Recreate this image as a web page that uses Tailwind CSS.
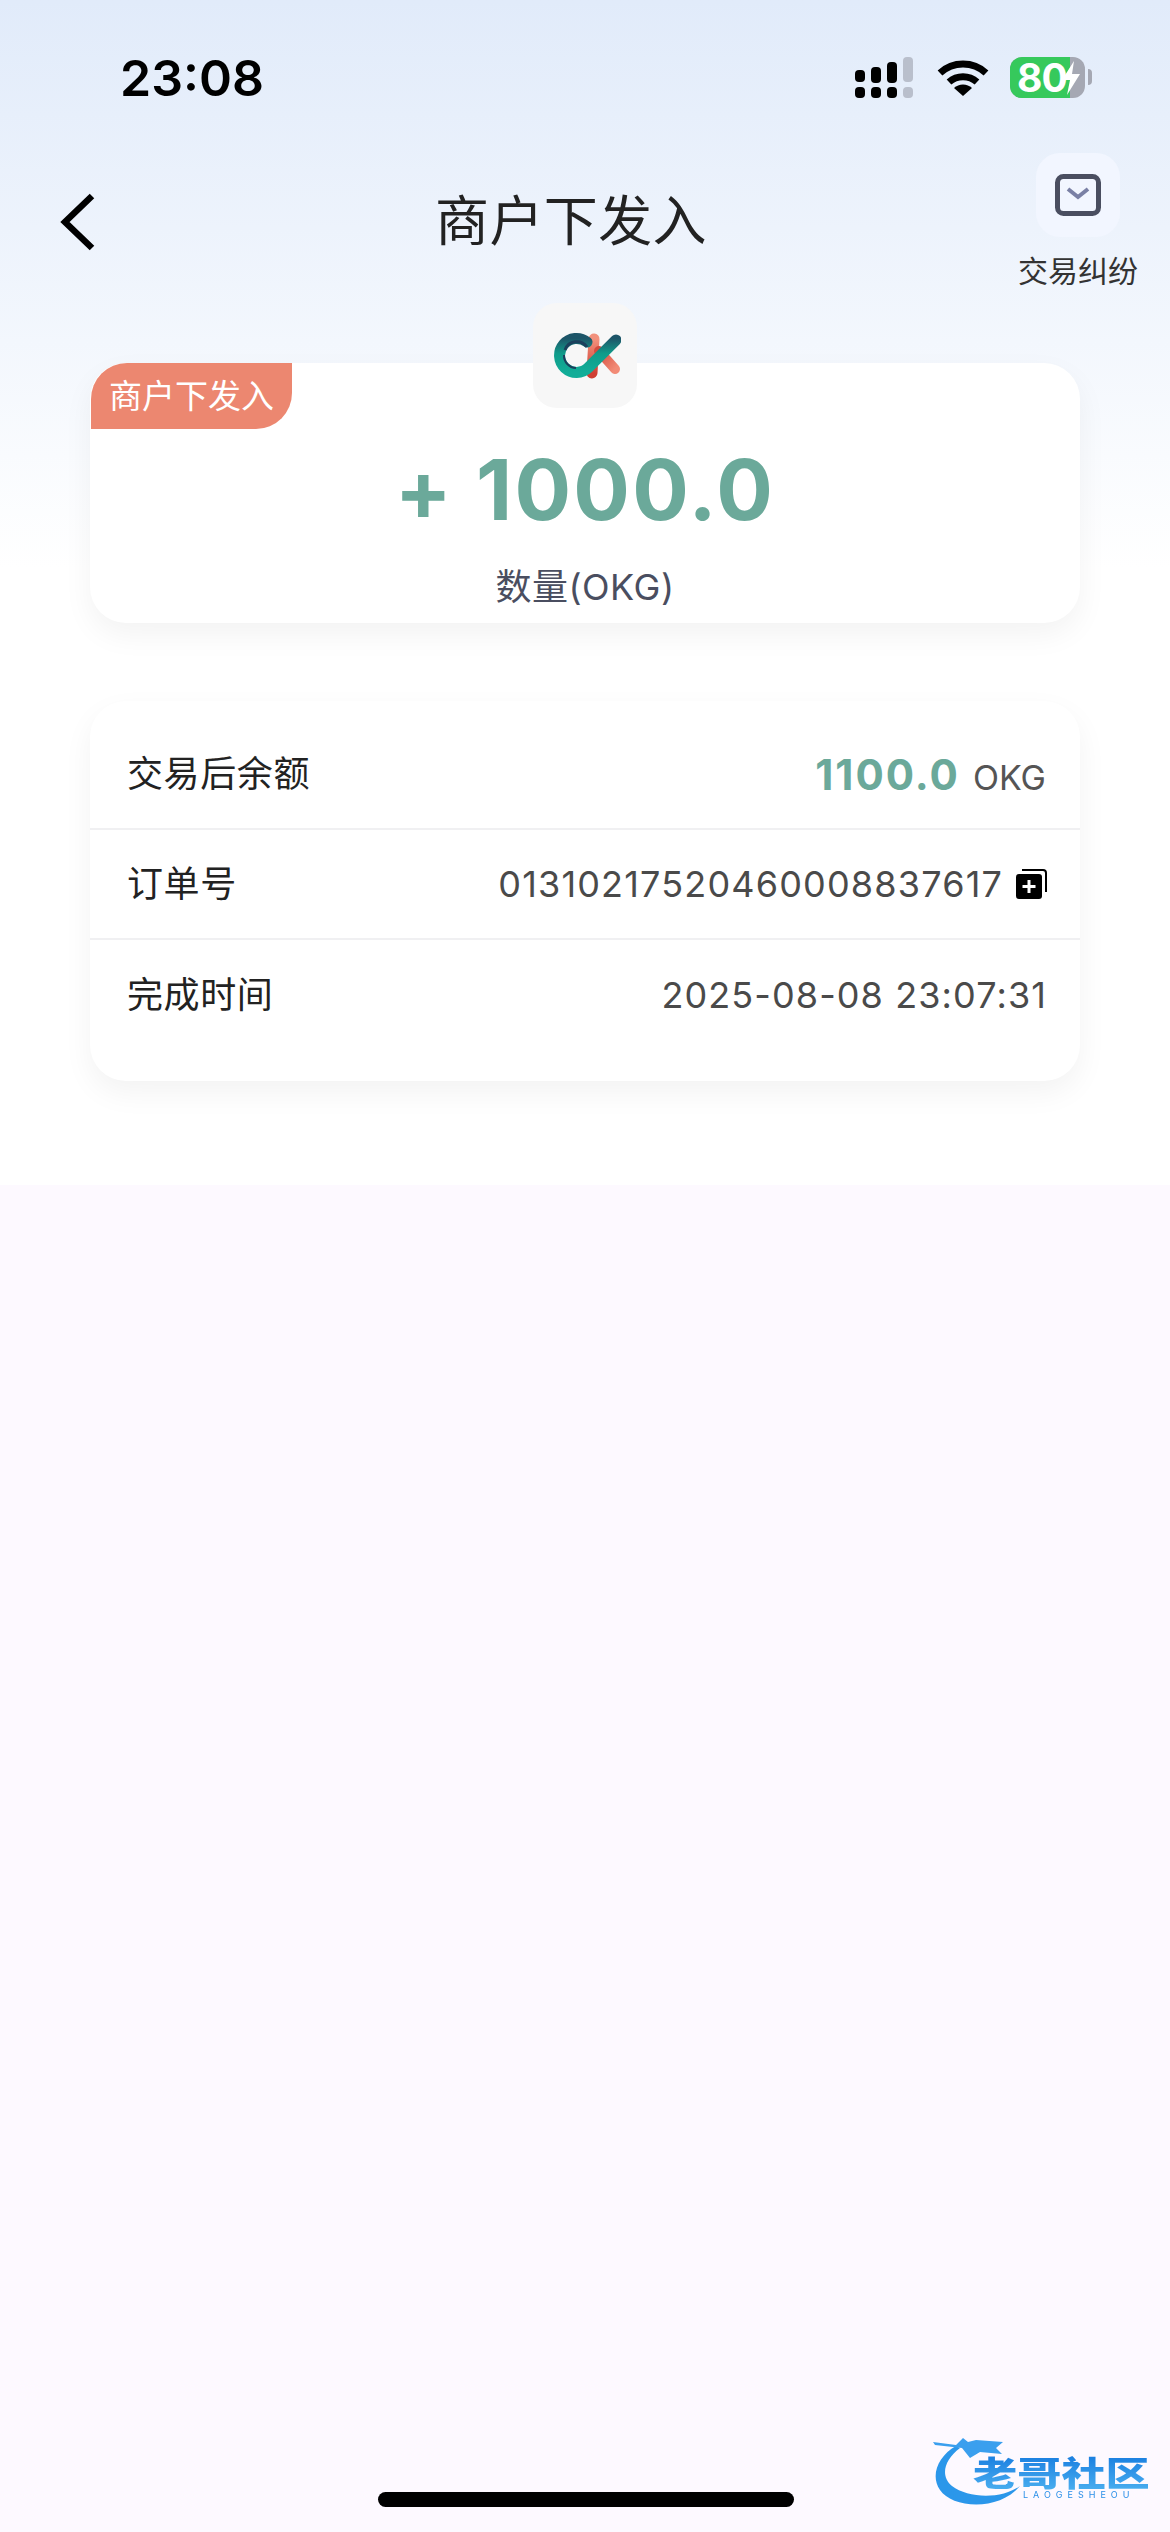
<!DOCTYPE html>
<html lang="zh">
<head>
<meta charset="utf-8">
<script src="https://cdn.jsdelivr.net/npm/@tailwindcss/browser@4"></script>
<title>商户下发入</title>
</head>
<body class="m-0 bg-[#fdf9ff]">
<div class="relative w-[1170px] h-[2532px] overflow-hidden bg-[#fdf9ff] font-['Inter','Noto_Sans_CJK_SC',sans-serif]">
  <div class="h-[1185px] bg-linear-to-b from-[#e1ebfa] to-white to-[48%]">

    <!-- status bar -->
    <div class="h-[153px] flex items-start justify-between">
      <div class="ml-[120px] mt-[50px] text-[50px] leading-[56px] font-semibold text-black">23:08</div>
      <div class="flex items-start mt-[57px] mr-[78px]">
        <svg width="60" height="42" viewBox="0 0 60 42">
          <g fill="#000">
            <rect x="0" y="13" width="10" height="12" rx="4"/><rect x="16" y="10" width="10" height="16" rx="4"/><rect x="32" y="5" width="10" height="21" rx="4"/>
            <rect x="0" y="30" width="10" height="11" rx="4"/><rect x="16" y="30" width="10" height="11" rx="4"/><rect x="32" y="30" width="10" height="11" rx="4"/>
          </g>
          <rect x="48" y="0" width="10" height="25" rx="4" fill="#b9bfcc"/><rect x="48" y="30" width="10" height="11" rx="4" fill="#b9bfcc"/>
        </svg>
        <svg width="52" height="40" viewBox="0 0 52 40" class="ml-[22px] mt-[2px]">
          <path d="M3 14 A34 34 0 0 1 49 14" fill="none" stroke="#000" stroke-width="7"/>
          <path d="M12 23 A21 21 0 0 1 40 23" fill="none" stroke="#000" stroke-width="7"/>
          <path d="M26 37 L17 29 A13 13 0 0 1 35 29 Z" fill="#000"/>
        </svg>
        <div class="relative ml-[21px] w-[75px] h-[41px] rounded-[12px] bg-[#a5a8b3] flex">
          <div class="w-[60px] h-full shrink-0 rounded-l-[12px] bg-[#36c95c] text-white text-[39px] leading-[41px] font-bold pl-[7px] tracking-[-1px]">80</div>
          <svg width="20" height="36" viewBox="0 0 20 36" class="absolute left-[51px] top-[3px]">
            <path d="M13 1 L1 20 L9 20 L6 35 L19 14 L11 14 Z" fill="#fff"/>
          </svg>
        </div>
        <div class="ml-[3px] mt-[12px] w-[4px] h-[16px] rounded-r-full bg-[#a5a8b3]"></div>
      </div>
    </div>

    <!-- nav -->
    <div class="h-[137px] flex items-start">
      <svg width="36" height="58" viewBox="0 0 36 58" class="ml-[60px] mt-[40px] shrink-0">
        <path d="M32 3 L5 29 L32 55" fill="none" stroke="#000" stroke-width="6.5"/>
      </svg>
      <div class="flex-1 ml-[28px] mt-[37px] text-center text-[54px] leading-[64px] tracking-[0.4px] text-[#222]">商户下发入</div>
      <div class="flex flex-col items-center w-[120px] mr-[32px] shrink-0">
        <div class="w-[84px] h-[84px] rounded-[24px] bg-[#f2f6ff] flex items-center justify-center">
          <svg width="46" height="42" viewBox="0 0 46 42">
            <rect x="2.5" y="2.5" width="41" height="37" rx="6" fill="none" stroke="#4a4e60" stroke-width="5"/>
            <path d="M13 15 L23 23 L33 15" fill="none" stroke="#7a80a5" stroke-width="4"/>
          </svg>
        </div>
        <div class="mt-[16px] text-[30px] leading-[36px] whitespace-nowrap text-[#333]">交易纠纷</div>
      </div>
    </div>

    <!-- amount card -->
    <div class="relative mt-[73px] mx-[90px] h-[260px] rounded-[36px] bg-white shadow-[0_12px_30px_rgba(0,0,0,0.05)] flex flex-col items-center">
      <div class="absolute left-[1px] top-0 w-[201px] h-[66px] bg-[#ec8770] rounded-tl-[36px] rounded-br-[36px] flex items-center justify-center text-white text-[33px] leading-[40px] whitespace-nowrap">商户下发入</div>
      <div class="absolute left-[443px] top-[-60px] w-[104px] h-[105px] rounded-[24px] bg-[#f7f7f7] flex items-center justify-center">
        <svg width="72" height="62" viewBox="0 0 72 62">
          <defs>
            <linearGradient id="t" x1="0" y1="0" x2="0" y2="1"><stop offset="0" stop-color="#1d5568"/><stop offset="0.45" stop-color="#0f9c8a"/><stop offset="1" stop-color="#12ad98"/></linearGradient>
            <linearGradient id="r" x1="0" y1="0" x2="0" y2="1"><stop offset="0" stop-color="#f2917c"/><stop offset="1" stop-color="#cf3f33"/></linearGradient>
            <linearGradient id="r2" x1="0" y1="0" x2="1" y2="1"><stop offset="0" stop-color="#d44c3e"/><stop offset="1" stop-color="#f28b76"/></linearGradient>
          </defs>
          <path d="M45 14 L43 48" stroke="url(#r)" stroke-width="11" stroke-linecap="round" fill="none"/>
          <path d="M50 26 L66 44" stroke="url(#r2)" stroke-width="10" stroke-linecap="round" fill="none"/>
          <path d="M38 17 A17 17 0 1 0 39.5 42.5 L67 15" fill="none" stroke="url(#t)" stroke-width="11" stroke-linecap="round"/>
          <path d="M38 22 A12.5 12.5 0 0 0 16 25" fill="none" stroke="#1b3f5c" stroke-width="3"/>
          <path d="M15 30 A12.5 12.5 0 0 0 27 43" fill="none" stroke="#1b3f5c" stroke-width="2"/>
        </svg>
      </div>
      <div class="mt-[77px] text-[84px] leading-[100px] font-bold text-[#6ba99a] tracking-[2.2px] whitespace-nowrap">+ 1000.0</div>
      <div class="mt-[25px] text-[36px] leading-[44px] tracking-[0.5px] text-[#4a4e60] whitespace-nowrap">数量(OKG)</div>
    </div>

    <!-- detail card -->
    <div class="mt-[78px] mx-[90px] h-[380px] pt-[19px] rounded-[36px] bg-white shadow-[0_12px_30px_rgba(0,0,0,0.05)]">
      <div class="h-[110px] border-b-2 border-[#f0f0f2] flex items-center justify-between pl-[37px] pr-[34px]">
        <div class="text-[36px] tracking-[0.6px] text-[#222]">交易后余额</div>
        <div class="flex items-baseline gap-[13px]">
          <span class="text-[42px] font-bold text-[#6ba99a] tracking-[2px]">1100.0</span>
          <span class="text-[34px] text-[#555]">OKG</span>
        </div>
      </div>
      <div class="h-[110px] border-b-2 border-[#f0f0f2] flex items-center justify-between pl-[37px] pr-[33px]">
        <div class="text-[36px] tracking-[0.6px] text-[#222]">订单号</div>
        <div class="flex items-center gap-[12px]">
          <span class="text-[36px] tracking-[1.17px] text-[#4a4a4a]">01310217520460008837617</span>
          <svg width="32" height="32" viewBox="0 0 32 32">
            <path d="M7 2 H28 A3 3 0 0 1 31 5 V24" fill="none" stroke="#000" stroke-width="2"/>
            <rect x="1" y="6" width="26" height="25" rx="3" fill="#000"/>
            <path d="M14 12 V25 M7.5 18.5 H20.5" stroke="#fff" stroke-width="3"/>
          </svg>
        </div>
      </div>
      <div class="h-[110px] flex items-center justify-between pl-[37px] pr-[33px]">
        <div class="text-[36px] tracking-[0.6px] text-[#222]">完成时间</div>
        <div class="text-[36px] tracking-[1.1px] text-[#4a4a4a]">2025-08-08 23:07:31</div>
      </div>
    </div>
  </div>

  <!-- watermark -->
  <div class="absolute left-[930px] top-[2434px] w-[230px] h-[76px] blur-[0.6px]">
    <svg width="100" height="76" viewBox="0 0 100 76" class="absolute left-0 top-0">
      <path d="M26 12 C8 22 0 42 10 56 C22 74 68 78 90 52 C70 66 38 64 22 52 C10 42 14 26 30 14 Z" fill="#2b97ea"/>
      <path d="M3 8 L26 11 L33 4 L38 8 L46 6 L73 8 L66 14 L72 20 L50 18 L40 24 L32 14 L5 11 Z" fill="#3a9fee"/>
    </svg>
    <div class="absolute left-[43px] top-[22px] origin-left scale-x-[1.3] text-[34px] leading-[36px] font-black whitespace-nowrap bg-linear-to-b from-[#1a7fe0] to-[#4bb0f0] bg-clip-text text-transparent">老哥社区</div>
    <div class="absolute left-[93px] top-[56px] text-[9px] leading-[10px] whitespace-nowrap tracking-[5px] text-[#2a8fe8]">LAOGESHEOU</div>
  </div>

  <!-- home indicator -->
  <div class="absolute left-[378px] top-[2492px] w-[416px] h-[15px] rounded-full bg-black"></div>
</div>
</body>
</html>
